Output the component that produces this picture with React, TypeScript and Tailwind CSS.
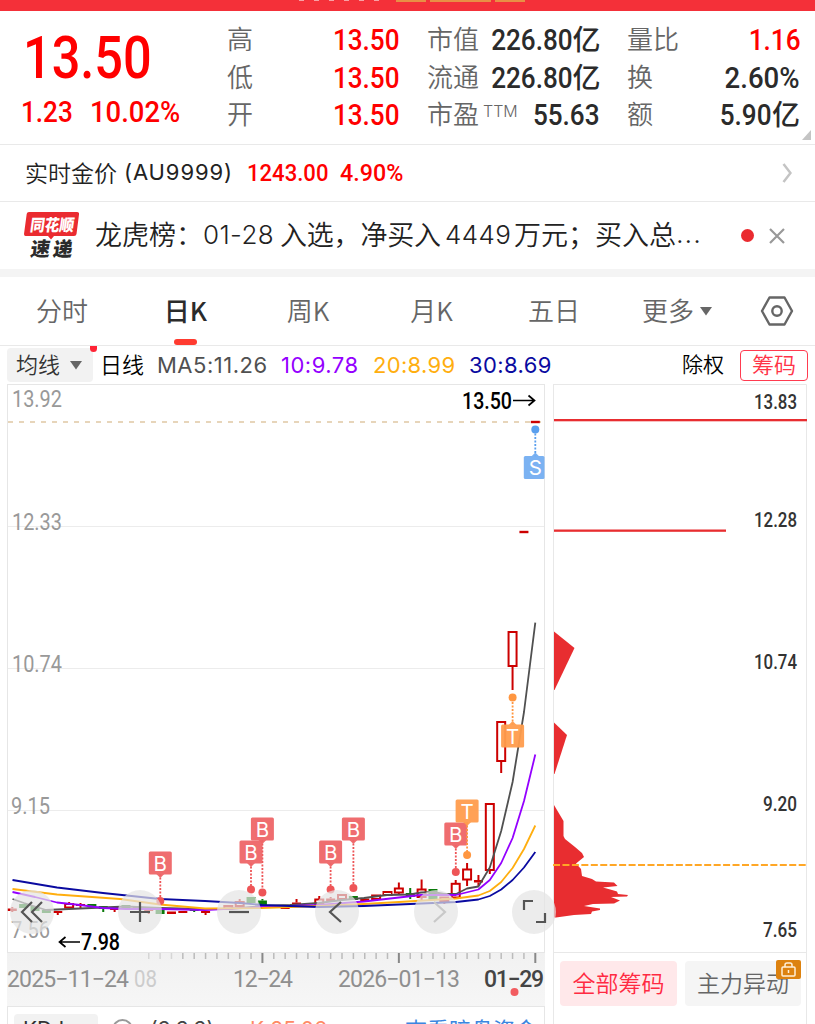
import React from 'react';
import clsx from 'clsx';

interface Candle {
  open: number;
  close: number;
  high?: number;
  low?: number;
  kind: 'up' | 'down' | 'flat';
}

interface Marker {
  label: 'B' | 'T' | 'S';
  x: number;
  y: number;
  dot: number;
}

const STEP = 11.37;
const LAST_X = 535.3;
const CHART_RIGHT = 544.5;

// y positions on the chart, oldest first
const candles: Candle[] = [
  { open: 908.5, close: 911, high: 907, low: 912, kind: 'flat' },
  { open: 904, close: 908, kind: 'down' },
  { open: 906, close: 911, kind: 'down' },
  { open: 910, close: 913, kind: 'down' },
  { open: 911, close: 913, low: 915, kind: 'flat' },
  { open: 904, close: 907.5, high: 902, kind: 'up' },
  { open: 904, close: 906, high: 903, low: 908, kind: 'flat' },
  { open: 904, close: 906.5, kind: 'down' },
  { open: 906, close: 909, low: 912, kind: 'down' },
  { open: 907, close: 910, low: 912, kind: 'flat' },
  { open: 905, close: 909, kind: 'down' },
  { open: 907, close: 909, kind: 'flat' },
  { open: 909, close: 911, low: 914, kind: 'flat' },
  { open: 909, close: 914, kind: 'down' },
  { open: 911.5, close: 914, kind: 'flat' },
  { open: 911, close: 913, kind: 'flat' },
  { open: 907, close: 911, low: 912, kind: 'down' },
  { open: 911, close: 913, low: 915, kind: 'flat' },
  { open: 908, close: 910, kind: 'flat' },
  { open: 906, close: 908.5, kind: 'up' },
  { open: 902, close: 906, high: 899, kind: 'up' },
  { open: 897, close: 903, kind: 'down' },
  { open: 900.5, close: 905, high: 899, kind: 'down' },
  { open: 906, close: 908, kind: 'flat' },
  { open: 906.5, close: 909, kind: 'flat' },
  { open: 902.5, close: 904.5, high: 899, kind: 'flat' },
  { open: 905, close: 907, kind: 'flat' },
  { open: 899.5, close: 904, high: 896, kind: 'up' },
  { open: 898.5, close: 901, high: 897, low: 902, kind: 'flat' },
  { open: 895, close: 899, kind: 'up' },
  { open: 896, close: 900, kind: 'down' },
  { open: 898.5, close: 901, kind: 'flat' },
  { open: 895.5, close: 899, kind: 'up' },
  { open: 892, close: 895, kind: 'up' },
  { open: 888.5, close: 892.5, high: 882.5, low: 895, kind: 'up' },
  { open: 893, close: 897, high: 888, low: 899, kind: 'down' },
  { open: 889.5, close: 897, high: 879.5, low: 900, kind: 'up' },
  { open: 889, close: 900, kind: 'down' },
  { open: 897.5, close: 901, low: 904, kind: 'up' },
  { open: 883.8, close: 897.5, high: 880, kind: 'up' },
  { open: 869.5, close: 879.5, high: 863, low: 886, kind: 'up' },
  { open: 880, close: 882.5, high: 875, low: 886, kind: 'flat' },
  { open: 804, close: 870, low: 874, kind: 'up' },
  { open: 722, close: 761, low: 773, kind: 'up' },
  { open: 632, close: 666, low: 690, kind: 'up' },
  { open: 530.8, close: 533.2, kind: 'flat' },
  { open: 420.8, close: 423.2, kind: 'flat' },
];

const averages = [
  {
    color: '#505050',
    points:
      '12.5,899 24,903 46,910 80,908.5 103,907.5 126,906.5 160,908 200,909 228,909 262,906 290,905 319,903 342,900 364,898 387,895 410,894.5 421,892.5 433,892 444,894 456,894 467,888.5 478.4,886.5 489.8,867.5 501.2,831 512.6,782 524,712 535.3,622.7',
  },
  {
    color: '#9400ff',
    points:
      '12.5,892 35,897 57,902.5 80,905 103,908 126,909 160,909 205,910 262,907 319,905 364,901.5 399,897.5 421,895 456,895 478.4,889.5 489.8,880 501.2,863 512.6,838 524,801 535.3,754.5',
  },
  {
    color: '#ffae0f',
    points:
      '12.5,889 57,894.5 120,899 160,904.5 205,908.5 262,908 319,906 364,904 399,902 456,898.5 478.4,895.5 489.8,891 501.2,882 512.6,868 524,849 535.3,825.5',
  },
  {
    color: '#0a0aa0',
    points:
      '12.5,880 57,887.5 103,893 160,899 205,901 240,903 262,905 290,906 319,907 364,906 399,904.5 456,902 478.4,899.5 489.8,896 501.2,889.5 512.6,880 524,867.5 535.3,852',
  },
];

const markers: Marker[] = [
  { label: 'B', x: 160.3, y: 863, dot: 901 },
  { label: 'B', x: 262.4, y: 829, dot: 892.5 },
  { label: 'B', x: 251, y: 852, dot: 889.5 },
  { label: 'B', x: 330.6, y: 852, dot: 889.5 },
  { label: 'B', x: 353.4, y: 829, dot: 888 },
  { label: 'B', x: 455.8, y: 834, dot: 872 },
  { label: 'T', x: 467.1, y: 811, dot: 855 },
  { label: 'T', x: 512.6, y: 736, dot: 697.5 },
  { label: 'S', x: 535.3, y: 467.5, dot: 429.5 },
];

const markerColors = {
  B: { box: '#ef6668', dot: '#ee5557' },
  T: { box: '#ff9d4d', dot: '#ff9640' },
  S: { box: '#74aef2', dot: '#5a9fee' },
};

const tabs = [
  { name: '分时', className: 'w-[124px]' },
  { name: '日K', className: 'w-[123px]', active: true },
  { name: '周K', className: 'w-[122px]' },
  { name: '月K', className: 'w-[125px]' },
  { name: '五日', className: 'w-[120px]' },
];

const quotes = [
  [
    { label: '高', value: '13.50', red: true },
    { label: '低', value: '13.50', red: true },
    { label: '开', value: '13.50', red: true },
  ],
  [
    { label: '市值', value: '226.80', unit: '亿' },
    { label: '流通', value: '226.80', unit: '亿' },
    { label: '市盈', sup: 'TTM', value: '55.63' },
  ],
  [
    { label: '量比', value: '1.16', red: true },
    { label: '换', value: '2.60%' },
    { label: '额', value: '5.90', unit: '亿' },
  ],
];

const digits = "font-['Roboto','Noto_Sans_CJK_SC',sans-serif] font-medium";

const QuoteHeader: React.FC = () => (
  <div className="flex h-[134px] border-b border-[#e9e9e9] relative">
    <div className="w-[227px] shrink-0 text-[#ff0000]">
      <div className={clsx(digits, 'ml-[23px] mt-[13px] h-[67px] leading-[67px] text-[59px] origin-left scale-x-[0.855] whitespace-nowrap')}>
        13.50
      </div>
      <div className={clsx(digits, 'flex ml-[21px] h-[42px] leading-[42px] text-[30px] whitespace-nowrap')}>
        <span className="w-[69px] origin-left scale-x-[0.87]">1.23</span>
        <span className="origin-left scale-x-[0.915]">10.02%</span>
      </div>
    </div>
    <div className="flex gap-[27px] pt-[10px]">
      {quotes.map((column, i) => (
        <div key={i} className="w-[173px]">
          {column.map(row => (
            <div key={row.label} className="flex justify-between items-center h-[37.5px] whitespace-nowrap">
              <span className="text-[26px] leading-[36px] mb-[3px] font-[350] text-[#666] flex">
                {row.label}
                {'sup' in row && <span className="text-[16px] leading-[32px] ml-[4px] font-light font-['Inter']">{row.sup}</span>}
              </span>
              <span className={clsx('flex items-center', row.red ? 'text-[#ff0000]' : 'text-[#2b2b2b]')}>
                <span
                  className={clsx(
                    digits,
                    'text-[30px] leading-[37px] origin-right',
                    row.value.endsWith('%') ? 'scale-x-[0.92]' : 'scale-x-[0.87]'
                  )}
                >
                  {row.value}
                </span>
                {row.unit && <span className="text-[28px] leading-[37px] mb-[2px] font-medium">{row.unit}</span>}
              </span>
            </div>
          ))}
        </div>
      ))}
    </div>
    <svg className="absolute right-[4px] bottom-[4px] w-[9px] h-[10px]" viewBox="0 0 9 10">
      <path d="M9 0V10H0Z" fill="#c4c4c4" />
    </svg>
  </div>
);

const NewsLogo: React.FC = () => (
  <svg className="w-[56px] h-[48px] shrink-0" viewBox="0 0 56 48">
    <path d="M5 0H53Q55.5 0 55 2.500L52.500 22Q52.200 24 50 24H30L27 27.500L24 24H1.500Q0 24 0 22L2.700 2Q3 0 5 0Z" fill="#ea2b30" />
    <g fontFamily="'Noto Sans CJK SC', sans-serif" fontWeight="900" transform="skewX(-8)">
      <text x="8" y="18.500" fontSize="16.500" fill="#fff" textLength="44" lengthAdjust="spacingAndGlyphs">同花顺</text>
      <text x="12" y="44" fontSize="19.500" fill="#2b2b2b" textLength="42" lengthAdjust="spacing">速递</text>
    </g>
  </svg>
);

const MarkerFlag: React.FC<{ marker: Marker }> = ({ marker }) => {
  const { label, x, y, dot } = marker;
  const color = markerColors[label];
  const dir = dot > y ? 1 : -1;
  const edge = y + dir * 11;
  const right = Math.min(x + 11.5, CHART_RIGHT);
  return (
    <g>
      <line x1={x} x2={x} y1={edge} y2={dot} stroke={color.dot} strokeWidth="1.800" strokeDasharray="2 1.500" />
      <circle cx={x} cy={dot} r="4" fill={color.dot} />
      <g opacity="0.95">
        <rect x={x - 11.5} y={y - 11.5} width={right - x + 11.5} height="23" rx="1.500" fill={color.box} />
        <path d={`M${x - 4} ${edge}H${x + 4}L${x} ${edge + dir * 4}Z`} fill={color.box} />
      </g>
      <text x={x} y={y + 7.5} fontSize="20.500" fill="#fff" textAnchor="middle" fontFamily="Inter, sans-serif">{label}</text>
    </g>
  );
};

const KLineChart: React.FC = () => (
  <svg className="block w-[538px] h-[569px] overflow-visible relative" viewBox="7 384 538 569">
    <rect x="7.500" y="384.500" width="537" height="568" fill="#fff" stroke="#e6e6e6" />
    {[526.5, 668.5, 810.5].map(y => (
      <line key={y} x1="8" x2="544" y1={y} y2={y} stroke="#ececec" />
    ))}
    <line x1="8" x2="544" y1="422" y2="422" stroke="#e0c8a4" strokeWidth="1.500" strokeDasharray="5 6" />

    <g fontFamily="Roboto, sans-serif" fontSize="23" fill="#999">
      <text x="12" y="407" textLength="50" lengthAdjust="spacingAndGlyphs">13.92</text>
      <text x="12" y="530" textLength="50" lengthAdjust="spacingAndGlyphs">12.33</text>
      <text x="12" y="672" textLength="50" lengthAdjust="spacingAndGlyphs">10.74</text>
      <text x="11" y="814" textLength="39" lengthAdjust="spacingAndGlyphs">9.15</text>
      <text x="11" y="938" textLength="39" lengthAdjust="spacingAndGlyphs">7.56</text>
    </g>

    {candles.map((c, i) => {
      const x = LAST_X - STEP * (candles.length - 1 - i);
      const color = c.kind === 'down' ? '#0a7a0a' : '#cc0000';
      return (
        <g key={i} stroke={color} strokeWidth="2">
          {c.high !== undefined && <line x1={x} x2={x} y1={c.high} y2={c.open} />}
          {c.low !== undefined && <line x1={x} x2={x} y1={c.close} y2={c.low} />}
          {c.kind === 'up' ? (
            <rect x={x - 4} y={c.open} width="8" height={c.close - c.open} fill="none" />
          ) : (
            <rect x={x - 4.5} y={c.open} width="9" height={c.close - c.open} fill={color} stroke="none" />
          )}
        </g>
      );
    })}
    {averages.map(line => (
      <polyline key={line.color} points={line.points} fill="none" stroke={line.color} strokeWidth="1.800" strokeLinejoin="round" />
    ))}
    {markers.map((m, i) => (
      <MarkerFlag key={i} marker={m} />
    ))}

    <g fontFamily="Roboto, sans-serif" fontSize="23" fontWeight="500" fill="#000">
      <text x="462" y="408.500" textLength="50" lengthAdjust="spacingAndGlyphs">13.50</text>
      <text x="81" y="950" textLength="39" lengthAdjust="spacingAndGlyphs">7.98</text>
    </g>
    <g fill="none" stroke="#000" strokeWidth="1.700">
      <path d="M513 400.500H534M528.500 395.500L534.500 400.500L528.500 405.500" />
      <path d="M80 942H60M65.500 937L59.500 942L65.500 947" />
    </g>
  </svg>
);

const TimeAxis: React.FC = () => (
  <svg className="block w-[538px] h-[53px] bg-gradient-to-b from-[#f1f1f1] to-[#f6f6f6]" viewBox="7 953 538 53">
    {Array.from({ length: 35 }, (_, i) => {
      const major = i === 0 || i === 12 || i === 24;
      const x = LAST_X - STEP * i;
      return (
        <line
          key={i}
          x1={x}
          x2={x}
          y1="953"
          y2={major ? 963 : 959}
          stroke={major ? '#888' : '#bbb'}
          strokeWidth={major ? 2 : 1.5}
          opacity={i > 31 ? 0.5 : 1}
        />
      );
    })}
    <g fontFamily="Roboto, sans-serif" fontSize="23" fill="#8f8f8f">
      <text x="7" y="987" textLength="122" lengthAdjust="spacing">2025−11−24</text>
      <text x="134" y="987" textLength="23" lengthAdjust="spacingAndGlyphs" fill="#ccc">08</text>
      <text x="233" y="987" textLength="60" lengthAdjust="spacing">12−24</text>
      <text x="338" y="987" textLength="122" lengthAdjust="spacing">2026−01−13</text>
      <text x="484" y="987" textLength="60" lengthAdjust="spacing" fill="#444" fontWeight="500">01−29</text>
    </g>
    <circle cx="514.500" cy="992" r="4" fill="#f25c60" />
  </svg>
);

const ChipsChart: React.FC = () => (
  <svg className="block w-[254px] h-[569px]" viewBox="553 384 254 569">
    <path d="M553 384.500H806.500V953M553.500 384V953M553 952.500H807" fill="none" stroke="#e8e8e8" />
    <g fill="#e82d30">
      <rect x="554" y="419" width="253" height="2.300" />
      <rect x="554" y="529.500" width="172" height="2.300" />
      <path d="M554 631.500L574.500 648L554.500 690H554Z" />
      <path d="M554 722.500L567 735L554.500 774H554Z" />
      <path d="M554 805L563.500 821V836L565 839L575 847L582 853L584 857L576 863.500L581 869L582 876L592 879L596 881.500L614 882.500L617.500 886L603 887.500L612 890L617 891.500L618 894L628 895L627 896.500L611 897L620 900.500L614 903.500L593 904L584 906L600 908.500V910L592 911.500L591 914L574 915L556 917.500H554Z" />
    </g>
    <line x1="553" x2="807" y1="865" y2="865" stroke="#ffa726" strokeWidth="1.800" strokeDasharray="7 2.450" />
    <g fontFamily="Roboto, sans-serif" fontSize="19.500" fontWeight="500" fill="#333">
      <text x="754" y="409" textLength="43" lengthAdjust="spacingAndGlyphs">13.83</text>
      <text x="754" y="527" textLength="43" lengthAdjust="spacingAndGlyphs">12.28</text>
      <text x="754" y="669" textLength="43" lengthAdjust="spacingAndGlyphs">10.74</text>
      <text x="763" y="811" textLength="34" lengthAdjust="spacingAndGlyphs">9.20</text>
      <text x="763" y="937" textLength="34" lengthAdjust="spacingAndGlyphs">7.65</text>
    </g>
  </svg>
);

const controlIcons = [
  { name: 'oldest', path: 'M22 12L12 22L22 32M32 12L22 22L32 32', className: 'mr-[64px]' },
  { name: 'zoom in', path: 'M12 22H32M22 12V32', className: 'mr-[54.500px]' },
  { name: 'zoom out', path: 'M12 22H32', className: 'mr-[54.500px]' },
  { name: 'previous', path: 'M26 12L15 22L26 32', className: 'mr-[54.500px]' },
  { name: 'next', path: 'M20 12L31 22L20 32', className: 'mr-[54.500px]', disabled: true },
  { name: 'fullscreen', path: 'M12 20V11H21M33 23V32H24', className: '' },
];

const ChartControls: React.FC = () => (
  <div className="absolute left-[3px] top-[506px] flex z-10">
    {controlIcons.map(icon => (
      <button
        key={icon.name}
        aria-label={icon.name}
        className={clsx('size-[44px] shrink-0 rounded-full bg-[#e4e4e4]/70', icon.className)}
      >
        <svg viewBox="0 0 44 44" fill="none" stroke={icon.disabled ? '#c8c8c8' : '#555'} strokeWidth="2.200">
          <path d={icon.path} />
        </svg>
      </button>
    ))}
  </div>
);

const App: React.FC = () => {
  return (
    <div className="w-[815px] h-[1024px] overflow-hidden bg-white font-['Noto_Sans_CJK_SC',sans-serif]">
      {/* Status strip */}
      <div className="h-[11px] bg-[#f43039] flex items-start">
        <div className="flex gap-[10px] ml-[299px] w-[97px]">
          {[0, 1, 2, 3, 4, 5].map(i => (
            <span key={i} className="w-[5px] h-px bg-[#f9a0a4]" />
          ))}
        </div>
        <span className="w-[30px] h-[2px] bg-[#e88f45] mr-[4px]" />
        <span className="w-[61px] h-[2px] bg-[#e88f45] mr-[4px]" />
        <span className="w-[30px] h-[2px] bg-[#e88f45]" />
      </div>

      <QuoteHeader />

      {/* Gold price */}
      <div className="h-[57px] border-b border-[#e9e9e9] flex items-center pl-[25px] pr-[23px] whitespace-nowrap">
        <span className="text-[23px] leading-[32px] mb-[2px] font-[350] text-[#222] w-[222px] flex items-center">
          实时金价
          <span className="font-['Inter'] font-normal text-[22px] tracking-[0.9px] ml-[7px]">(AU9999)</span>
        </span>
        <span className={clsx(digits, 'text-[#ff0000] text-[24px] w-[93px] origin-left scale-x-[0.92]')}>1243.00</span>
        <span className={clsx(digits, 'text-[#ff0000] text-[24px] origin-left scale-x-[0.97]')}>4.90%</span>
        <svg className="w-[10px] h-[20px] ml-auto" viewBox="0 0 10 20" fill="none" stroke="#c4c4c4" strokeWidth="2.500">
          <path d="M1.500 1L8.500 10L1.500 19" />
        </svg>
      </div>

      {/* News */}
      <div className="h-[67px] flex items-center pl-[24px]">
        <NewsLogo />
        <div className="ml-[15px] mb-[3px] w-[646px] text-[27px] font-[350] text-[#222] flex items-center whitespace-nowrap">
          <span className="w-[108px]">龙虎榜：</span>
          <span className="font-['Inter'] font-light text-[26px] w-[77px] tracking-[0.4px]">01-28</span>
          <span className="w-[165px] tracking-[-0.2px]">入选，净买入</span>
          <span className="font-['Inter'] font-light text-[26px] w-[69px] tracking-[0.4px]">4449</span>
          <span>万元；买入总</span>
          <span className="font-['Inter'] tracking-[1px]">...</span>
        </div>
        <span className="size-[13px] rounded-full bg-[#ea2b30]" />
        <svg className="size-[16px] ml-[15px]" viewBox="0 0 16 16" stroke="#999" strokeWidth="2.200">
          <path d="M1 1L15 15M15 1L1 15" />
        </svg>
      </div>
      <div className="h-[8px] bg-[#f4f4f4]" />

      {/* Period tabs */}
      <div className="h-[69px] border-b border-[#e9e9e9] flex items-center text-[26px] font-[350] text-[#666]">
        {tabs.map(tab => (
          <div key={tab.name} className={clsx('h-full flex items-center justify-center relative pb-[3px]', tab.className, tab.active && 'text-[#2b2b2b] font-medium')}>
            {tab.name}
            {tab.active && <span className="absolute bottom-0 w-[23px] h-[6px] rounded-full bg-[#ff3b30]" />}
          </div>
        ))}
        <div className="flex items-center ml-[28px] pb-[3px]">
          更多
          <svg className="w-[12px] h-[9px] ml-[6px] mt-[3px]" viewBox="0 0 12 9">
            <path d="M0 0H12L6 8.500Z" fill="#666" />
          </svg>
        </div>
        <svg className="w-[34px] h-[30px] ml-[48px]" viewBox="0 0 34 30" fill="none" stroke="#666" strokeWidth="2.400">
          <path d="M9.500 1.500H24.500L32 15L24.500 28.500H9.500L2 15Z" strokeLinejoin="round" />
          <circle cx="17" cy="15" r="4.700" />
        </svg>
      </div>

      {/* Moving averages */}
      <div className="h-[38px] flex items-center pl-[7px] pr-[7px] whitespace-nowrap font-['Inter','Noto_Sans_CJK_SC'] text-[22px]">
        <div className="w-[86px] h-[34px] rounded-[4px] bg-[#f2f2f2] text-[#333] font-[350] flex items-center pl-[9px] relative">
          均线
          <svg className="w-[12px] h-[9px] ml-[10px]" viewBox="0 0 12 9">
            <path d="M0 0H12L6 8.500Z" fill="#666" />
          </svg>
          <span className="absolute -right-[4px] -top-[2px] w-[7px] h-[6px] rounded-b-full bg-[#ff2436]" />
        </div>
        <span className="ml-[7px] w-[57px] text-black font-[350]">日线</span>
        <span className="w-[124px] text-[#505050] tracking-[0.500px]">MA5:11.26</span>
        <span className="w-[92px] text-[#9400ff] tracking-[0.500px]">10:9.78</span>
        <span className="w-[96px] text-[#ffae0f] tracking-[0.300px]">20:8.99</span>
        <span className="w-[213px] text-[#0a0aa0] tracking-[0.400px]">30:8.69</span>
        <span className="text-black text-[21px] font-[350]">除权</span>
        <span className="ml-auto w-[68px] h-[31px] rounded-[4px] border border-[#ff3b50] text-[#ff3347] font-[350] flex items-center justify-center">筹码</span>
      </div>

      {/* Charts */}
      <div className="flex pl-[7px] gap-[8px] relative">
        <div className="w-[538px] shrink-0 relative">
          <KLineChart />
          <TimeAxis />
          <ChartControls />
          <div className="h-[60px] border border-[#e6e6e6] flex items-start pt-[7px] pl-[6px] whitespace-nowrap font-['Inter','Noto_Sans_CJK_SC'] text-[21px] leading-[32px]">
            <span className="w-[84px] h-[34px] rounded-[4px] bg-[#f2f2f2] text-[#333] pl-[9px]">KDJ</span>
            <span className="ml-[14px] mt-[5px] size-[21px] rounded-full border-2 border-[#999]" />
            <span className="ml-[17px] w-[100px] text-[#444]">(9,3,3)</span>
            <span className="w-[155px] text-[#ff8a65]">K:85.06</span>
            <span className="text-[#3b86e0] text-[22px]">查看暗盘资金</span>
          </div>
        </div>
        <div className="w-[254px] shrink-0">
          <ChipsChart />
          <div className="border-x border-[#e8e8e8] h-[80px] flex gap-[8px] pt-[8px] pl-[6px] text-[23px] font-[350]">
            <span className="w-[117px] h-[45px] pb-[2px] rounded-[4px] bg-[#ffe8ea] text-[#ff2a42] flex items-center justify-center">全部筹码</span>
            <span className="w-[116px] h-[45px] pb-[2px] rounded-[4px] bg-[#f5f5f5] text-[#666] flex items-center justify-center relative">
              主力异动
              <span className="absolute right-0 -top-px w-[25px] h-[19px] rounded-[2px] bg-[#dd820f] flex items-center justify-center">
                <svg className="w-[15px] h-[15px]" viewBox="0 0 15 15" fill="none" stroke="#fff0d8" strokeWidth="1.500">
                  <rect x="1" y="5" width="13" height="9" rx="1" />
                  <path d="M4 5V3Q4 1 6 1H9Q11 1 11 3V5M7.500 8V11" />
                </svg>
              </span>
            </span>
          </div>
        </div>
      </div>
    </div>
  );
};

export default App;
